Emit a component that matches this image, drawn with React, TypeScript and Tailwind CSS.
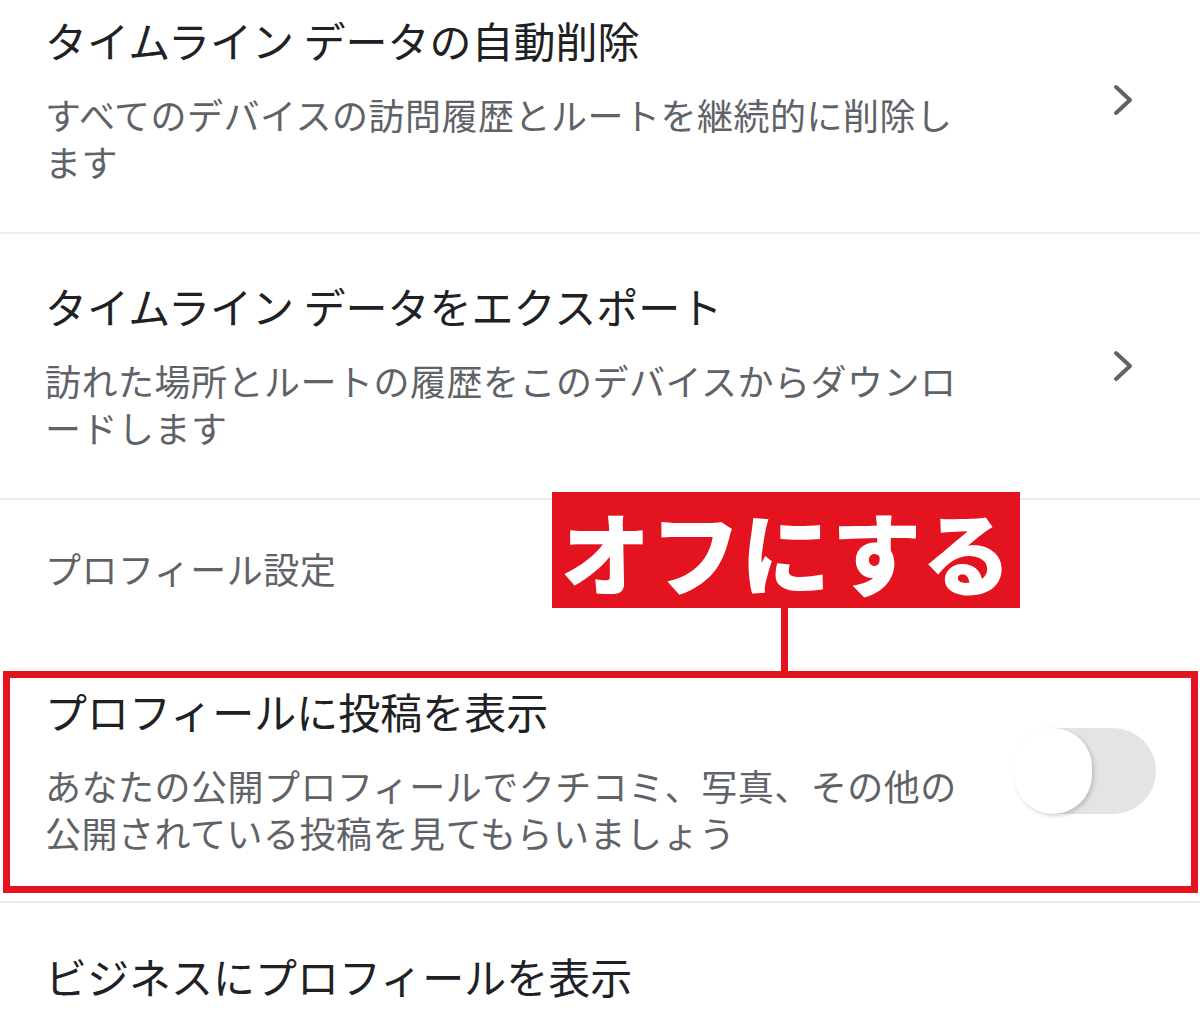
import type { ReactNode } from "react";

const font = { fontFamily: '"Noto Sans CJK JP", "Noto Sans", sans-serif' };

function Chevron() {
  return (
    <svg width="22" height="32" viewBox="0 0 22 32" className="mr-[66px] shrink-0">
      <polyline points="4,3 18,16 4,29" fill="none" stroke="#5f6368" strokeWidth="4" strokeLinecap="round" strokeLinejoin="round" />
    </svg>
  );
}

function Toggle() {
  return (
    <div className="relative mr-[44px] h-[86px] w-[142px] shrink-0 rounded-full bg-[#e4e4e4]">
      <div className="absolute left-0 top-0 h-[86px] w-[78px] rounded-full bg-white shadow-[2px_2px_4px_rgba(0,0,0,0.18)]" />
    </div>
  );
}

function Item({
  title,
  desc,
  right,
  className,
}: {
  title: string;
  desc: ReactNode;
  right: ReactNode;
  className: string;
}) {
  return (
    <div className={`flex items-center justify-between pl-[45px] ${className}`}>
      <div className="w-[927px]">
        <div className="text-[42px] leading-[52px] text-[#202124]">{title}</div>
        <div className="mt-[25px] text-[36px] leading-[47px] tracking-[0.5px] text-[#5f6368]">{desc}</div>
      </div>
      {right}
    </div>
  );
}

function Divider() {
  return <div className="h-[2px] w-full bg-[#ececec]" />;
}

export default function App() {
  return (
    <div className="relative h-[1011px] w-[1200px] overflow-hidden bg-white" style={font}>
      <Item
        className="pt-[14px] pb-[47px]"
        title="タイムライン データの自動削除"
        desc="すべてのデバイスの訪問履歴とルートを継続的に削除します"
        right={<Chevron />}
      />
      <Divider />
      <Item
        className="pt-[46px] pb-[47px]"
        title="タイムライン データをエクスポート"
        desc="訪れた場所とルートの履歴をこのデバイスからダウンロードします"
        right={<Chevron />}
      />
      <Divider />
      <div className="pl-[45px] pt-[45px] pb-[47px] text-[36px] leading-[47px] tracking-[0.5px] text-[#5f6368]">
        プロフィール設定
      </div>

      <div className="relative">
        <Item
          className="pt-[46px] pb-[45px]"
          title="プロフィールに投稿を表示"
          desc="あなたの公開プロフィールでクチコミ、写真、その他の公開されている投稿を見てもらいましょう"
          right={<Toggle />}
        />
        {/* annotation frame */}
        <div className="pointer-events-none absolute left-[3px] right-[2px] top-[32px] h-[222px] border-[7px] border-[#e3131f]" />
      </div>
      <Divider />
      <div className="pl-[45px] pt-[47px] text-[42px] leading-[52px] text-[#202124]">
        ビジネスにプロフィールを表示
      </div>

      {/* callout label */}
      <div className="absolute left-[552px] top-[492px] flex h-[116px] w-[468px] items-center justify-center bg-[#e3131f]">
        <span className="text-[90px] font-black leading-none text-white">オフにする</span>
      </div>
      <div className="absolute left-[781px] top-[608px] h-[64px] w-[7px] bg-[#e3131f]" />
    </div>
  );
}
